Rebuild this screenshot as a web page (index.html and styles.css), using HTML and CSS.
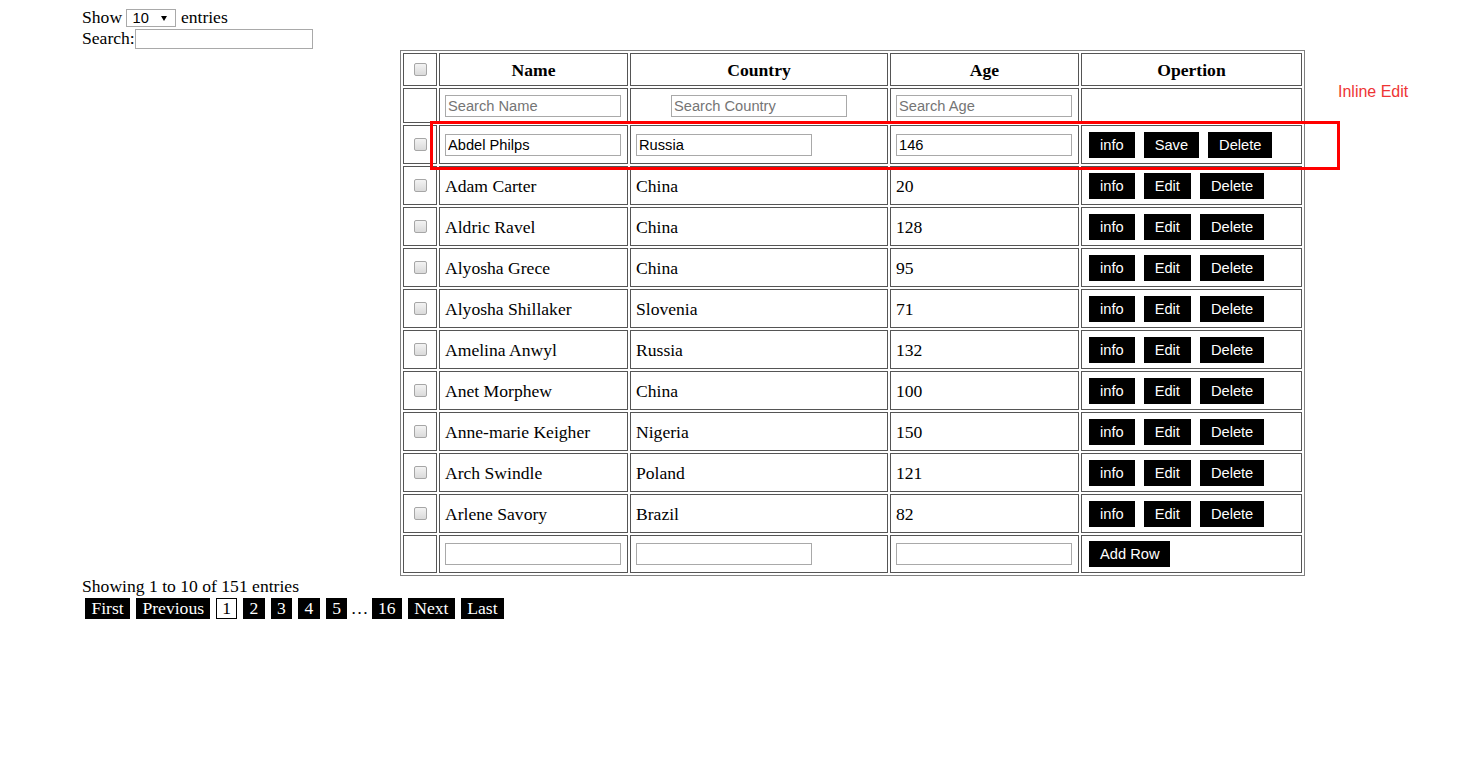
FILE: index.html
```html
<!DOCTYPE html>
<html>
<head>
<meta charset="utf-8">
<title>Inline Edit</title>
<link rel="stylesheet" href="styles.css">
</head>
<body>
<div class="page">
  <div class="length-line">Show <span class="select-wrap"><select class="select"><option>10</option><option>25</option><option>50</option></select></span> entries</div>
  <div class="search-line">Search:<input class="global-search" type="text"></div>

  <table class="grid">
    <colgroup>
      <col class="c-check"><col class="c-name"><col class="c-country"><col class="c-age"><col class="c-op">
    </colgroup>
    <thead>
      <tr class="row-head">
        <th><input class="cb" type="checkbox"></th>
        <th class="tx">Name</th>
        <th class="tx">Country</th>
        <th class="tx">Age</th>
        <th class="tx">Opertion</th>
      </tr>
      <tr class="row-search">
        <td></td>
        <td><input class="field" type="text" placeholder="Search Name"></td>
        <td><input class="field centered" type="text" placeholder="Search Country"></td>
        <td><input class="field" type="text" placeholder="Search Age"></td>
        <td></td>
      </tr>
    </thead>
    <tbody>
      <tr class="row-data">
        <td><input class="cb" type="checkbox"></td>
        <td><input class="field" type="text" value="Abdel Philps"></td>
        <td><input class="field" type="text" value="Russia"></td>
        <td><input class="field" type="text" value="146"></td>
        <td class="op"><div class="btns"><button class="btn">info</button><button class="btn">Save</button><button class="btn">Delete</button></div></td>
      </tr>
      <tr class="row-data">
        <td><input class="cb" type="checkbox"></td>
        <td class="tx">Adam Carter</td><td class="tx">China</td><td class="tx">20</td>
        <td class="op"><div class="btns"><button class="btn">info</button><button class="btn">Edit</button><button class="btn">Delete</button></div></td>
      </tr>
      <tr class="row-data">
        <td><input class="cb" type="checkbox"></td>
        <td class="tx">Aldric Ravel</td><td class="tx">China</td><td class="tx">128</td>
        <td class="op"><div class="btns"><button class="btn">info</button><button class="btn">Edit</button><button class="btn">Delete</button></div></td>
      </tr>
      <tr class="row-data">
        <td><input class="cb" type="checkbox"></td>
        <td class="tx">Alyosha Grece</td><td class="tx">China</td><td class="tx">95</td>
        <td class="op"><div class="btns"><button class="btn">info</button><button class="btn">Edit</button><button class="btn">Delete</button></div></td>
      </tr>
      <tr class="row-data">
        <td><input class="cb" type="checkbox"></td>
        <td class="tx">Alyosha Shillaker</td><td class="tx">Slovenia</td><td class="tx">71</td>
        <td class="op"><div class="btns"><button class="btn">info</button><button class="btn">Edit</button><button class="btn">Delete</button></div></td>
      </tr>
      <tr class="row-data">
        <td><input class="cb" type="checkbox"></td>
        <td class="tx">Amelina Anwyl</td><td class="tx">Russia</td><td class="tx">132</td>
        <td class="op"><div class="btns"><button class="btn">info</button><button class="btn">Edit</button><button class="btn">Delete</button></div></td>
      </tr>
      <tr class="row-data">
        <td><input class="cb" type="checkbox"></td>
        <td class="tx">Anet Morphew</td><td class="tx">China</td><td class="tx">100</td>
        <td class="op"><div class="btns"><button class="btn">info</button><button class="btn">Edit</button><button class="btn">Delete</button></div></td>
      </tr>
      <tr class="row-data">
        <td><input class="cb" type="checkbox"></td>
        <td class="tx">Anne-marie Keigher</td><td class="tx">Nigeria</td><td class="tx">150</td>
        <td class="op"><div class="btns"><button class="btn">info</button><button class="btn">Edit</button><button class="btn">Delete</button></div></td>
      </tr>
      <tr class="row-data">
        <td><input class="cb" type="checkbox"></td>
        <td class="tx">Arch Swindle</td><td class="tx">Poland</td><td class="tx">121</td>
        <td class="op"><div class="btns"><button class="btn">info</button><button class="btn">Edit</button><button class="btn">Delete</button></div></td>
      </tr>
      <tr class="row-data">
        <td><input class="cb" type="checkbox"></td>
        <td class="tx">Arlene Savory</td><td class="tx">Brazil</td><td class="tx">82</td>
        <td class="op"><div class="btns"><button class="btn">info</button><button class="btn">Edit</button><button class="btn">Delete</button></div></td>
      </tr>
      <tr class="row-add">
        <td></td>
        <td><input class="field" type="text"></td>
        <td><input class="field" type="text"></td>
        <td><input class="field" type="text"></td>
        <td class="op"><div class="btns"><button class="btn">Add Row</button></div></td>
      </tr>
    </tbody>
  </table>

  <div class="info-line">Showing 1 to 10 of 151 entries</div>
  <div class="pager">
    <span class="pg">First</span>
    <span class="pg">Previous</span>
    <span class="pg current">1</span>
    <span class="pg">2</span>
    <span class="pg">3</span>
    <span class="pg">4</span>
    <span class="pg">5</span>
    <span class="ellipsis">…</span>
    <span class="pg">16</span>
    <span class="pg">Next</span>
    <span class="pg">Last</span>
  </div>

  <div class="highlight"></div>
  <div class="note">Inline Edit</div>
</div>
</body>
</html>
```

FILE: styles.css
```css
html, body {
  margin: 0;
  padding: 0;
  background: #ffffff;
}

body {
  font-family: "Liberation Serif", "Times New Roman", serif;
  font-size: 17.6px;
  color: #000000;
}

.page {
  position: relative;
  padding: 9px 0 0 82px;
  min-height: 740px;
}

.length-line {
  height: 20px;
  line-height: 16px;
  white-space: nowrap;
}

.select-wrap {
  position: relative;
  display: inline-block;
  vertical-align: top;
}

.select {
  -webkit-appearance: none;
  appearance: none;
  width: 50px;
  height: 18px;
  box-sizing: border-box;
  border: 1px solid #a9a9a9;
  border-radius: 0;
  background: #ffffff;
  padding: 0 0 0 5px;
  margin: 0;
  font-family: "Liberation Sans", Arial, sans-serif;
  font-size: 14.67px;
  line-height: 16px;
  color: #000000;
  display: block;
}

.select-wrap::after {
  content: "";
  position: absolute;
  left: 35px;
  top: 7px;
  width: 0;
  height: 0;
  border-left: 3px solid transparent;
  border-right: 3px solid transparent;
  border-top: 5px solid #000000;
  pointer-events: none;
}

.search-line {
  height: 21px;
  line-height: 19px;
  white-space: nowrap;
}

.global-search {
  width: 178px;
  height: 20px;
  box-sizing: border-box;
  border: 1px solid #a9a9a9;
  padding: 1px 2px;
  margin: 0;
  font-family: "Liberation Sans", Arial, sans-serif;
  font-size: 14.67px;
  vertical-align: top;
}

/* table */
.grid {
  box-sizing: border-box;
  width: 905px;
  margin-left: 318px;
  table-layout: fixed;
  border-collapse: separate;
  border-spacing: 2px;
  border: 1px solid #808080;
}

.c-check { width: 34px; }
.c-name { width: 189px; }
.c-country { width: 258px; }
.c-age { width: 189px; }
.c-op { width: 221px; }

.grid th,
.grid td {
  box-sizing: border-box;
  border: 1px solid #555555;
  padding: 0 5px;
  vertical-align: middle;
  text-align: left;
  white-space: nowrap;
}

.grid th {
  text-align: center;
  font-weight: bold;
}

.grid .tx {
  padding-top: 2px;
}

.row-head { height: 33px; }
.row-search { height: 35px; }
.row-data { height: 39px; }
.row-add { height: 38px; }

.grid td.op {
  padding-left: 7px;
}

.cb {
  -webkit-appearance: none;
  appearance: none;
  display: block;
  width: 13px;
  height: 13px;
  margin: 0 auto;
  box-sizing: border-box;
  border: 1px solid #a6a6a6;
  border-radius: 2px;
  background: linear-gradient(#f3f3f3, #dadada);
}

.field {
  display: block;
  width: 176px;
  height: 22px;
  box-sizing: border-box;
  border: 1px solid #a9a9a9;
  padding: 1px 2px;
  margin: 0;
  font-family: "Liberation Sans", Arial, sans-serif;
  font-size: 14.67px;
  color: #000000;
  background: #ffffff;
}

.field::placeholder {
  color: #757575;
}

.field.centered {
  margin: 0 auto;
}

.btns {
  display: flex;
  gap: 9px;
}

.btn {
  height: 26px;
  padding: 0 11px;
  margin: 0;
  border: none;
  border-radius: 0;
  background: #000000;
  color: #ffffff;
  font-family: "Liberation Sans", Arial, sans-serif;
  font-size: 14.67px;
  line-height: 26px;
}

/* footer */
.info-line {
  height: 21px;
  line-height: 21px;
  white-space: nowrap;
}

.pager {
  display: flex;
  align-items: center;
  gap: 6px;
  padding: 1px 0 0 3px;
  white-space: nowrap;
}

.pg {
  display: inline-block;
  height: 21.4px;
  line-height: 21.4px;
  padding: 0 6.4px;
  background: #000000;
  color: #ffffff;
}

.pg.current {
  box-sizing: border-box;
  height: 21.4px;
  line-height: 19.4px;
  background: #ffffff;
  color: #000000;
  border: 1px solid #000000;
  padding: 0 4.9px;
}

.ellipsis {
  margin: 0 -2.7px;
  line-height: 21.4px;
}

/* annotation overlay */
.highlight {
  position: absolute;
  left: 430px;
  top: 121px;
  width: 910px;
  height: 49px;
  box-sizing: border-box;
  border: 3px solid #ff0000;
  pointer-events: none;
}

.note {
  position: absolute;
  left: 1338px;
  top: 83px;
  font-family: "Liberation Sans", Arial, sans-serif;
  font-size: 16px;
  color: #ee3434;
  white-space: nowrap;
}
```
